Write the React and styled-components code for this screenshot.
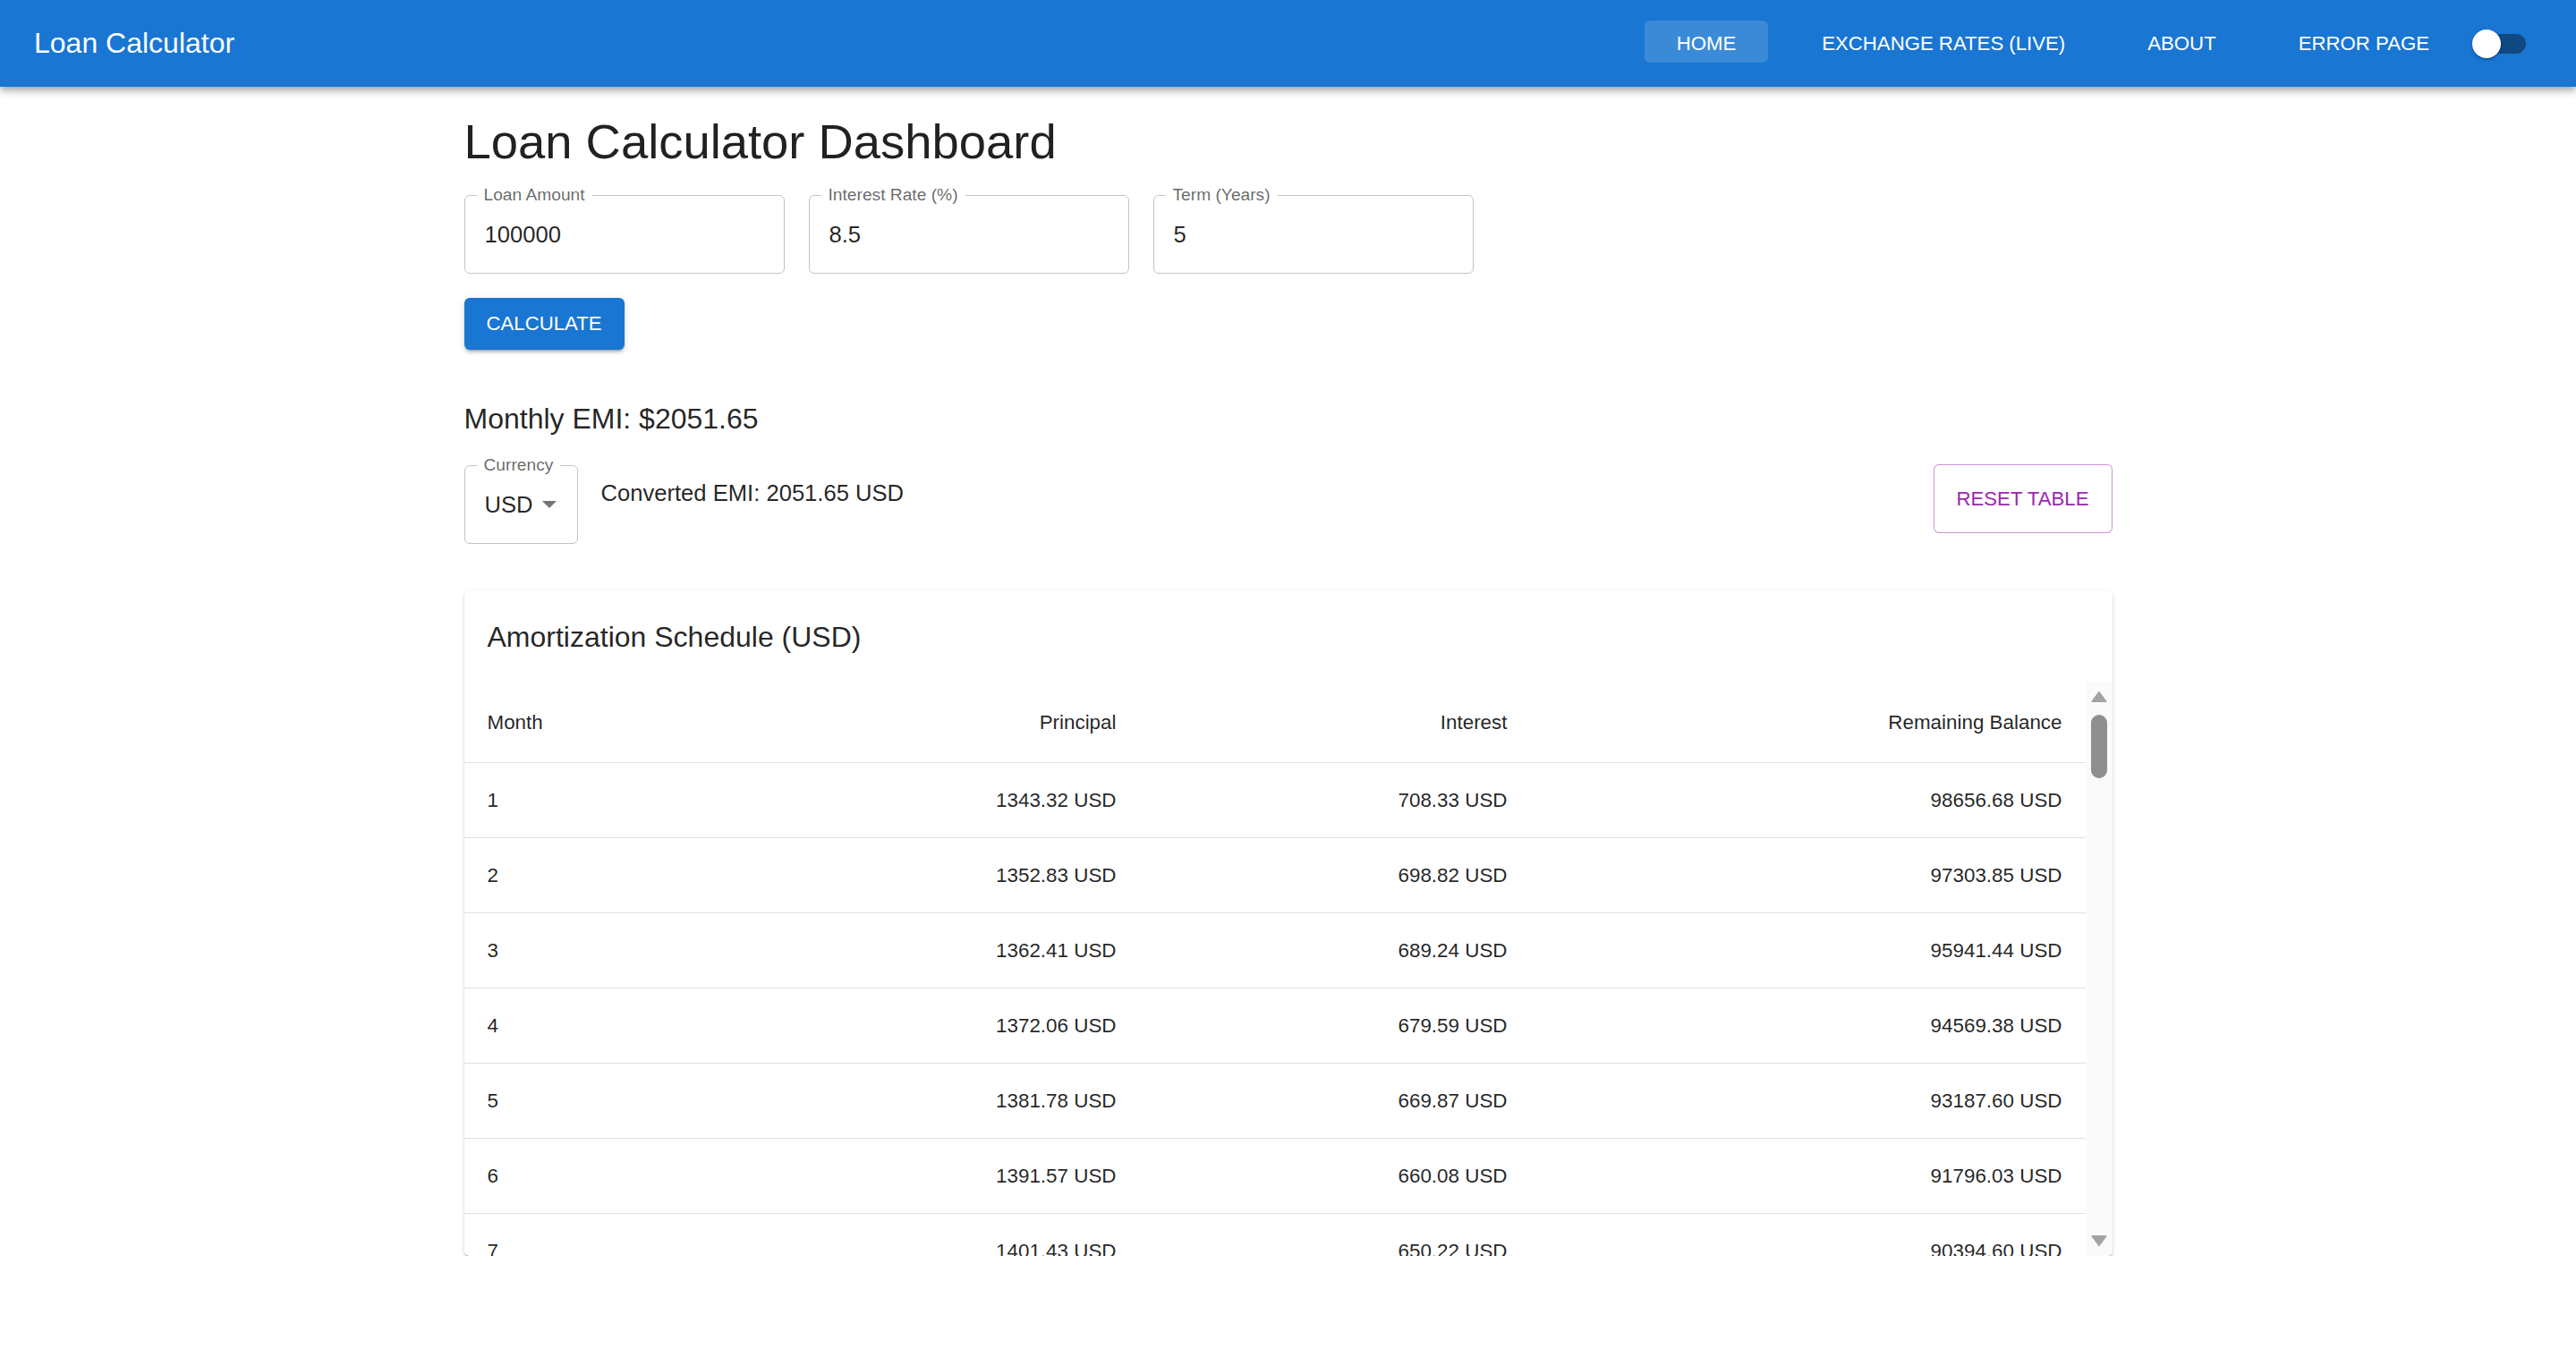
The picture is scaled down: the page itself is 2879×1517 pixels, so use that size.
import styled, { createGlobalStyle } from 'styled-components'

const GlobalStyle = createGlobalStyle`
  body {
    margin: 0;
    background: #fff;
    font-family: "Liberation Sans", Arial, Helvetica, sans-serif;
    color: rgba(0, 0, 0, 0.87);
  }
`

const AppBar = styled.header`
  height: 97px;
  background: #1976d2;
  display: flex;
  align-items: center;
  padding: 0 37px 0 38px;
  box-shadow: 0 3px 6px -1px rgba(0,0,0,0.2), 0 6px 8px 0 rgba(0,0,0,0.14), 0 2px 14px 0 rgba(0,0,0,0.12);
  position: relative;
  z-index: 2;
`

const Brand = styled.div`
  flex: 1;
  color: #fff;
  font-size: 32px;
  line-height: 1.6;
`

const Nav = styled.nav`
  display: flex;
  align-items: center;
  gap: 20px;
`

const NavButton = styled.button`
  height: 47px;
  margin-bottom: 5px;
  padding: 5px 36px 0;
  border: none;
  border-radius: 6px;
  background: ${p => (p.$active ? 'rgba(255,255,255,0.15)' : 'transparent')};
  color: #fff;
  font-family: inherit;
  font-size: 22.2px;
  text-transform: uppercase;
  cursor: pointer;
  &:first-child {
    margin-right: 4px;
  }
`

const SwitchRoot = styled.div`
  position: relative;
  width: 93px;
  height: 60px;
  margin-left: -2px;
  padding: 0 19px 0 20px;
  box-sizing: border-box;
  display: flex;
  align-items: center;
`

const SwitchTrack = styled.span`
  width: 54px;
  height: 22px;
  border-radius: 11px;
  background: #0f4982;
`

const SwitchThumb = styled.span`
  position: absolute;
  left: 14px;
  top: 50%;
  width: 32px;
  height: 32px;
  margin-top: -16px;
  border-radius: 50%;
  background: #fff;
  box-shadow: 0 3px 2px -2px rgba(0,0,0,0.2), 0 2px 2px 0 rgba(0,0,0,0.14), 0 1px 5px 0 rgba(0,0,0,0.12);
`

const Main = styled.main`
  width: 1842px;
  margin: 0 auto;
  padding-top: 28px;
`

const PageTitle = styled.h1`
  margin: 0;
  font-size: 54.4px;
  font-weight: 400;
  line-height: 67px;
`

const FieldRow = styled.div`
  display: flex;
  gap: 27px;
  margin-top: 26px;
`

const Outlined = styled.div`
  position: relative;
  width: ${p => p.$width || 358}px;
  height: 88px;
  box-sizing: border-box;
  border: 1px solid #c4c4c4;
  border-radius: 6px;
  display: flex;
  align-items: center;
`

const FieldLabel = styled.label`
  position: absolute;
  left: 13px;
  top: -11px;
  padding: 0 8px;
  background: #fff;
  font-size: 19.2px;
  line-height: 19.2px;
  color: rgba(0, 0, 0, 0.6);
`

const FieldInput = styled.input`
  width: 100%;
  height: 100%;
  box-sizing: border-box;
  padding: 0 22px;
  border: none;
  outline: none;
  background: transparent;
  font-family: inherit;
  font-size: 25.6px;
  color: rgba(0, 0, 0, 0.87);
`

const PrimaryButton = styled.button`
  display: block;
  margin-top: 27px;
  height: 58px;
  padding: 0 25px;
  border: none;
  border-radius: 6px;
  background: #1976d2;
  color: #fff;
  font-family: inherit;
  font-size: 22.2px;
  text-transform: uppercase;
  box-shadow: 0 4px 2px -3px rgba(0,0,0,0.2), 0 3px 3px 0 rgba(0,0,0,0.14), 0 2px 8px 0 rgba(0,0,0,0.12);
  cursor: pointer;
`

const EmiHeading = styled.h2`
  margin: 52px 0 0;
  font-size: 32px;
  font-weight: 400;
  line-height: 51px;
`

const ConvertRow = styled.div`
  display: flex;
  align-items: flex-start;
  margin-top: 26px;
`

const SelectValue = styled.div`
  display: flex;
  align-items: center;
  gap: 10px;
  padding-left: 22px;
  font-size: 25.6px;
  color: rgba(0, 0, 0, 0.87);
`

const ConvertedText = styled.p`
  margin: 12px 0 0 26px;
  font-size: 25.6px;
  line-height: 38px;
`

const OutlineButton = styled.button`
  margin: -1px 0 0 auto;
  width: 200px;
  height: 77px;
  border: 1px solid rgba(156, 39, 176, 0.5);
  border-radius: 6px;
  background: #fff;
  color: #9c27b0;
  font-family: inherit;
  font-size: 22.2px;
  text-transform: uppercase;
  cursor: pointer;
`

const Card = styled.section`
  margin-top: 52px;
  background: #fff;
  border-radius: 6px;
  overflow: hidden;
  box-shadow: 0 3px 2px -2px rgba(0,0,0,0.2), 0 2px 2px 0 rgba(0,0,0,0.14), 0 2px 5px 0 rgba(0,0,0,0.12);
`

const CardTitle = styled.h3`
  margin: 0;
  padding: 27px 26px 25px;
  font-size: 32px;
  font-weight: 400;
  line-height: 51px;
`

const TableArea = styled.div`
  display: flex;
  height: 641px;
`

const TableWrap = styled.div`
  flex: 1;
  overflow-y: auto;
  scrollbar-width: none;
  &::-webkit-scrollbar {
    display: none;
  }
`

const ScrollRail = styled.div`
  width: 30px;
  flex-shrink: 0;
  background: #fafafa;
  display: flex;
  flex-direction: column;
  align-items: center;
`

const RailArrow = styled.div`
  height: 30px;
  box-sizing: border-box;
  padding-top: ${p => (p.$down ? 6 : 9)}px;
  margin-top: ${p => (p.$down ? 'auto' : 0)};
`

const RailThumb = styled.div`
  width: 18px;
  height: 71px;
  margin-top: 6px;
  border-radius: 9px;
  background: #8f8f8f;
`

const Table = styled.table`
  width: 100%;
  table-layout: fixed;
  border-collapse: separate;
  border-spacing: 0;
  font-size: 22.4px;
`

const Th = styled.th`
  position: sticky;
  top: 0;
  height: 90px;
  box-sizing: border-box;
  padding: 0 26px;
  background: #fff;
  font-weight: 400;
  text-align: ${p => p.$align || 'left'};
  border-bottom: 1px solid #e0e0e0;
`

const Td = styled.td`
  height: 84px;
  box-sizing: border-box;
  padding: 0 26px;
  text-align: ${p => p.$align || 'left'};
  border-bottom: 1px solid #e0e0e0;
`

const DropArrow = () => (
  <svg width="16" height="8" viewBox="0 0 10 5" fill="#757575">
    <path d="M0 0l5 5 5-5z" />
  </svg>
)

const RailTriangle = ({ down }) => (
  <svg width="18" height="14" viewBox="0 0 18 14" fill="#a3a3a3">
    {down
      ? <path d="M1.5 1h15a1 1 0 0 1 .8 1.6L9.8 12.6a1 1 0 0 1-1.6 0L0.7 2.6A1 1 0 0 1 1.5 1z" />
      : <path d="M1.5 13h15a1 1 0 0 0 .8-1.6L9.8 1.4a1 1 0 0 0-1.6 0L0.7 11.4A1 1 0 0 0 1.5 13z" />}
  </svg>
)

const round2 = v => Math.round(v * 100) / 100

const buildSchedule = (amount, rate, years) => {
  const r = rate / 12 / 100
  const n = years * 12
  const emi = round2((amount * r * Math.pow(1 + r, n)) / (Math.pow(1 + r, n) - 1))
  let balance = amount
  const rows = []
  for (let m = 1; m <= n; m++) {
    const interest = round2(balance * r)
    const principal = round2(emi - interest)
    balance = round2(balance - principal)
    rows.push({ m, principal, interest, balance: Math.max(balance, 0) })
  }
  return { emi, rows }
}

const App = () => {
  const { emi, rows } = buildSchedule(100000, 8.5, 5)

  return (
    <>
      <GlobalStyle />
      <AppBar>
        <Brand>Loan Calculator</Brand>
        <Nav>
          <NavButton $active>Home</NavButton>
          <NavButton>Exchange Rates (Live)</NavButton>
          <NavButton>About</NavButton>
          <NavButton>Error Page</NavButton>
        </Nav>
        <SwitchRoot>
          <SwitchTrack />
          <SwitchThumb />
        </SwitchRoot>
      </AppBar>

      <Main>
        <PageTitle>Loan Calculator Dashboard</PageTitle>
        <FieldRow>
          <Outlined>
            <FieldLabel>Loan Amount</FieldLabel>
            <FieldInput defaultValue="100000" />
          </Outlined>
          <Outlined>
            <FieldLabel>Interest Rate (%)</FieldLabel>
            <FieldInput defaultValue="8.5" />
          </Outlined>
          <Outlined>
            <FieldLabel>Term (Years)</FieldLabel>
            <FieldInput defaultValue="5" />
          </Outlined>
        </FieldRow>
        <PrimaryButton>Calculate</PrimaryButton>

        <EmiHeading>Monthly EMI: ${emi.toFixed(2)}</EmiHeading>
        <ConvertRow>
          <Outlined $width={127}>
            <FieldLabel>Currency</FieldLabel>
            <SelectValue>
              USD <DropArrow />
            </SelectValue>
          </Outlined>
          <ConvertedText>Converted EMI: {emi.toFixed(2)} USD</ConvertedText>
          <OutlineButton>Reset Table</OutlineButton>
        </ConvertRow>

        <Card>
          <CardTitle>Amortization Schedule (USD)</CardTitle>
          <TableArea>
            <TableWrap>
              <Table>
                <colgroup>
                  <col style={{ width: 377 }} />
                  <col style={{ width: 378 }} />
                  <col style={{ width: 437 }} />
                  <col />
                </colgroup>
                <thead>
                  <tr>
                    <Th>Month</Th>
                    <Th $align="right">Principal</Th>
                    <Th $align="right">Interest</Th>
                    <Th $align="right">Remaining Balance</Th>
                  </tr>
                </thead>
                <tbody>
                  {rows.map(row => (
                    <tr key={row.m}>
                      <Td>{row.m}</Td>
                      <Td $align="right">{row.principal.toFixed(2)} USD</Td>
                      <Td $align="right">{row.interest.toFixed(2)} USD</Td>
                      <Td $align="right">{row.balance.toFixed(2)} USD</Td>
                    </tr>
                  ))}
                </tbody>
              </Table>
            </TableWrap>
            <ScrollRail>
              <RailArrow>
                <RailTriangle />
              </RailArrow>
              <RailThumb />
              <RailArrow $down>
                <RailTriangle down />
              </RailArrow>
            </ScrollRail>
          </TableArea>
        </Card>
      </Main>
    </>
  )
}

export default App
